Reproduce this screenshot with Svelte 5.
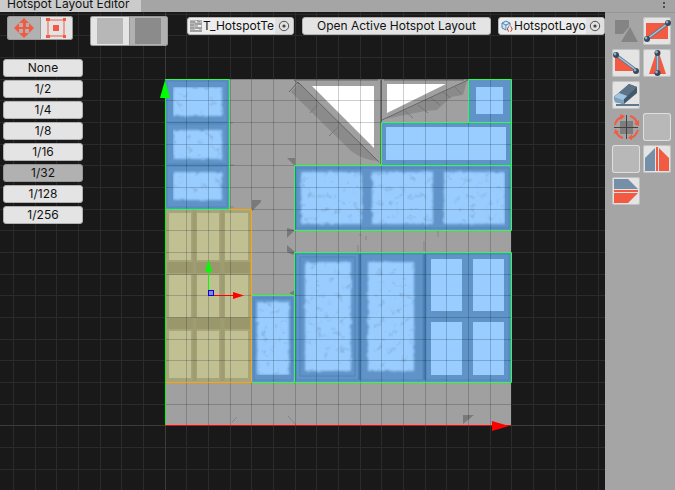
<script>
  const scales = ['None', '1/2', '1/4', '1/8', '1/16', '1/32', '1/128', '1/256'];
  let scale = $state('1/32');
  let mode = $state('move');
  let shade = $state('light');
  let texture = $state('T_HotspotTe');
  let layout = $state('HotspotLayo');

  // Hotspot rectangles and the bright panels of the texture: [x, y, width, height]
  const blues = [
    [165, 79, 64, 130], [252, 296, 42, 86], [381, 122, 130, 43],
    [468, 79, 43, 43], [294, 166, 217, 64], [294, 252, 217, 130]
  ];
  const roughPanels = [
    [173, 87, 49, 29], [173, 130, 49, 29], [173, 172, 49, 28],
    [301, 172, 61, 52], [372, 172, 61, 52], [444, 172, 61, 52],
    [257, 302, 32, 73], [305, 262, 46, 109], [368, 262, 46, 109]
  ];
  const cleanPanels = [
    [476, 87, 27, 27], [386, 127, 120, 33],
    [431, 259, 31, 52], [473, 259, 31, 52], [431, 322, 31, 53], [473, 322, 31, 53]
  ];
  const seams = [
    [167, 81, 60, 41], [167, 124, 60, 40], [167, 166, 60, 41],
    [254, 298, 38, 82], [296, 168, 213, 60], [300, 257, 55, 119],
    [296, 254, 63, 126], [361, 254, 62, 126], [426, 254, 83, 126]
  ];
  const olive = [];
  for (const [y, h] of [[213, 47], [275, 42], [331, 47]])
    for (const [x, w] of [[169, 22], [197, 22], [225, 23]]) olive.push([x, y, w, h]);
  const marks = ['M287 158h8v8z', 'M252 211v-11h9v2z', 'M287 228v10l8-8z', 'M287 245v7l6 3 2-3z', 'M463 415h11l-11 9z', 'M289 293l6-3v6z'];
  const lines = Array.from({ length: 17 }, (_, i) => Math.floor((i * 65) / 3) + 0.5);
</script>

{#snippet ball(x, y)}
  <circle cx={x} cy={y} r="3" fill="#36495c" />
  <circle cx={x - 1} cy={y - 1} r="1.4" fill="#91aec5" />
{/snippet}

{#snippet rects(list)}
  {#each list as [x, y, w, h]}<rect {x} {y} width={w} height={h} />{/each}
{/snippet}

{#snippet picker(name)}
  <button class="pick" aria-label={name}>
    <svg width="12" height="12" viewBox="0 0 12 12"><circle cx="6" cy="6" r="4.7" fill="none" stroke="#505050" /><circle cx="6" cy="6" r="1.6" fill="#444" /></svg>
  </button>
{/snippet}

<div class="window">
  <header>
    <div class="tab">Hotspot Layout Editor</div>
    <button class="more" aria-label="Window menu"><i></i><i></i></button>
  </header>
  <div class="body">
    <main>
      <svg class="scene" aria-hidden="true">
        <defs>
          <pattern id="grid" x="165" y="79" width="65" height="65" patternUnits="userSpaceOnUse">
            <path d="M.5 0V65M21.5 0V65M43.5 0V65M0 .5H65M0 21.5H65M0 43.5H65" stroke="#2b2b2b" />
          </pattern>
          <filter id="soft" x="-5%" y="-5%" width="110%" height="110%"><feGaussianBlur stdDeviation="0.6" /></filter>
          <filter id="rough" x="0" y="0" width="100%" height="100%">
            <feTurbulence type="fractalNoise" baseFrequency="0.2" numOctaves="3" seed="8" result="n" />
            <feDisplacementMap in="SourceGraphic" in2="n" scale="3" xChannelSelector="R" yChannelSelector="G" result="d" />
            <feGaussianBlur in="d" stdDeviation="0.9" />
          </filter>
          <filter id="specks" x="0" y="0" width="100%" height="100%">
            <feTurbulence type="fractalNoise" baseFrequency="0.13" numOctaves="5" seed="5" />
            <feColorMatrix values="0 0 0 0 .2  0 0 0 0 .42  0 0 0 0 .66  2.4 0 0 0 -1.42" />
            <feComposite in2="SourceGraphic" operator="in" />
          </filter>
        </defs>
        <rect width="100%" height="100%" fill="#191919" />
        <g transform="translate(0 -12)">
          <rect width="4000" height="4000" fill="url(#grid)" />
          <path d="M165.5 12V4000M0 425.5H4000" stroke="#3b3b3b" />
          <rect x="165" y="79" width="346" height="346" fill="#a0a0a0" />
          <g filter="url(#soft)">
            <path d="M291 92l8-9 79 78q-15-1-27-10z" fill="#8b8b8b" />
            <path d="M385 119l82-38-4 14-12 2-14 13-12 1z" fill="#8b8b8b" />
            <path d="M405 111l8 7M418 105l10 8M431 98l9 7M443 92l8 6M455 87l6 7M317 105l-7 8M338 127l-9 9" stroke="#787878" />
            <path d="M296 80H378M384 80H464" stroke="#828282" stroke-width="2" />
            <path d="M381 80V164" stroke="#707070" stroke-width="2" />
          </g>
          <path d="M289 92l9-10 81 80M294 80l5 4M382 120l86-40" fill="none" stroke="#666" />
          <path d="M312 86H374V148zM387 84H446L387 113z" fill="#fff" filter="url(#soft)" />
          <g fill="#7a7a7a" filter="url(#soft)">{#each marks as d}<path {d} />{/each}</g>
          <path d="M232 422l5-5M288 416l8 9M359 235h2M366 236v4M438 231v6M358 245v7M424 241v10M229 123h4M229 165h5M230 207h4" stroke="#858585" fill="none" />

          <g fill="#6094c8">{@render rects(blues)}</g>
          <g fill="none" stroke="#5085bb" filter="url(#soft)">{@render rects(seams)}</g>
          <path d="M359.5 254V380M424.5 254V380" stroke="#447ab1" stroke-width="2" filter="url(#soft)" />
          <g fill="#99ccff" filter="url(#rough)">{@render rects(roughPanels)}</g>
          <g filter="url(#specks)">{@render rects(roughPanels)}</g>
          <g fill="#99ccff" filter="url(#soft)">{@render rects(cleanPanels)}</g>

          <rect x="165" y="209" width="87" height="173" fill="#a6a47a" />
          <path d="M167 267.5h83M167 323.5h83" stroke="#9a976c" stroke-width="11" />
          <path d="M194.5 210V381M222.5 210V381" stroke="#9f9c72" stroke-width="4" />
          <g fill="#c1c093" filter="url(#soft)">{@render rects(olive)}</g>

          <g stroke="#001020" stroke-opacity=".2">
            {#each lines as at}
              <path d="M{165 + at} 79v346M165 {79 + at}h346" />
            {/each}
          </g>

          <g fill="none" stroke="#2cff43">
            <path d="M165 79.5H229.5V209.5H165M252 295.5H294.5M252 382.5H294" />
            <path d="M381.5 122.5H511.5V165.5H381.5zM468.5 79.5H511.5V122.5H468.5z" />
            <path d="M294.5 165.5H511.5V230.5H294.5zM294.5 252.5H511.5V382.5H294.5z" />
          </g>
          <path d="M229 209.5H251.5V382.5H165" fill="none" stroke="#ffa500" />
          <path d="M165.5 425V88" stroke="#0f0" />
          <path d="M165 80l5 18h-10z" fill="#0f0" />
          <path d="M165 425.5H511" stroke="#f00" />
          <path d="M492 421l17 5-17 5z" fill="#f00" />
          <path d="M208.5 295V268" stroke="#0f0" />
          <path d="M208.5 260l3.5 11.5h-7z" fill="#0f0" />
          <path d="M209 295.5H235" stroke="#f00" />
          <path d="M233 292l11 3.5-11 3.5z" fill="#f00" />
          <rect x="208.5" y="290.5" width="5" height="5" fill="#8e8cab" stroke="#00f" />
        </g>
      </svg>

      <div class="toolbar">
        <div class="segment">
          <button class:on={mode === 'move'} aria-label="Move" onclick={() => (mode = 'move')}>
            <svg width="20" height="20" viewBox="0 0 20 20"><path fill="#f25a42" d="M10 0l5 5h-3v4h3V5l5 5-5 5v-4h-4v4h4l-5 5-5-5h4v-4H5v4l-5-5 5-5v4h4V5H5z" /></svg>
          </button>
          <button class:on={mode === 'rect'} aria-label="Rectangle" onclick={() => (mode = 'rect')}>
            <svg width="20" height="20" viewBox="0 0 20 20" fill="#f25a42"><path d="M2 2h16v16H2z" fill="none" stroke="#f25a42" /><path d="M0 0h4v3H0zM17 0h3v3h-3zM0 17h4v3H0zM17 17h3v3h-3zM7 7h6v6H7z" /></svg>
          </button>
        </div>
        <div class="segment shades">
          <button class:on={shade === 'dark'} aria-label="Light background" onclick={() => (shade = 'dark')}><span class="swatch light"></span></button>
          <button class:on={shade === 'light'} aria-label="Dark background" onclick={() => (shade = 'light')}><span class="swatch"></span></button>
        </div>
        <div class="field">
          <svg width="12" height="12" viewBox="0 0 12 12"><rect width="12" height="12" fill="#b8b8b8" /><path d="M0 2h5M0 5h4M0 8h4M5 4h7M5 8h7M7 0l3 2M0 11h12" stroke="#898989" /><path d="M5 1h2v2zM8 5h3v2H8zM5 9h4v1H5z" fill="#eee" /></svg>
          <input aria-label="Texture" bind:value={texture} />
          {@render picker('Pick texture')}
        </div>
        <button class="plain open">Open Active Hotspot Layout</button>
        <div class="field last">
          <svg width="12" height="12" viewBox="0 0 12 12" fill="none"><path d="M1 3l4-2 4 2v5L5 10 1 8zM1 3l4 2 4-2M5 5v5" stroke="#4b83b8" fill="#cfe0ee" /><path d="M5.5 6H12v6H5.5z" fill="#ededed" /><path d="M8 6.5q-1 0-1 1.5l-.8 1 .8 1q0 1.500 1 1.500M9.500 6.500q1 0 1 1.500l.8 1-.8 1q0 1.500-1 1.500" stroke="#b5452e" /></svg>
          <input aria-label="Layout" bind:value={layout} />
          {@render picker('Pick layout')}
        </div>
      </div>

      <div class="scales">
        {#each scales as s}
          <button class="plain" class:on={scale === s} onclick={() => (scale = s)}>{s}</button>
        {/each}
      </div>
    </main>

    <aside>
      <button class="flat" aria-label="Shapes"><svg viewBox="0 0 28 28"><path d="M3 3h14v7l-6 7H3zM18 10l8 15H9z" fill="#848484" /></svg></button>
      <button aria-label="Rectangle tool"><svg viewBox="0 0 28 28"><path d="M3 6h22v16H3z" fill="#f25a42" /><path d="M4 22L24 7" stroke="#60778c" stroke-width="3" /><path d="M4 22L24 7" stroke="#a9c6dd" stroke-width="1.5" />{@render ball(4, 22)}{@render ball(25, 6)}</svg></button>
      <button aria-label="Triangle tool"><svg viewBox="0 0 28 28"><path d="M3 6l21 16H3z" fill="#f25a42" /><path d="M4 6l20 15" stroke="#60778c" stroke-width="3" /><path d="M4 6l20 15" stroke="#a9c6dd" stroke-width="1.5" />{@render ball(4, 6)}{@render ball(24, 22)}</svg></button>
      <button aria-label="Cone tool"><svg viewBox="0 0 28 28"><path d="M13 4h3l7 21H6z" fill="#f25a42" /><path d="M14.5 4v20" stroke="#60778c" stroke-width="3" /><path d="M14.5 4v20" stroke="#a9c6dd" stroke-width="1.5" />{@render ball(14.5, 4)}{@render ball(14.5, 24)}</svg></button>
      <button aria-label="Erase"><svg viewBox="0 0 28 28"><path d="M4 24h23" stroke="#63778a" stroke-width="2" /><path d="M2 16L17 3l8 3v6L12 23l-9-2z" fill="#43586b" /><path d="M2 16L17 3l8 3-12 11z" fill="#5d7488" /><path d="M2 16l5-4 8 3-3 3v5l-9-2z" fill="#7da1bf" /><path d="M2 16l5-4 8 3-4 4z" fill="#a3c4df" /></svg></button>
      <button class="flat" aria-label="Rotate"><svg viewBox="0 0 28 28"><path d="M8 8h13v13H8z" fill="#7e7e7e" /><g fill="none" stroke="#f25a42" stroke-width="2"><path d="M3 12q1-6 7-8M18 3q6 2 7 7M26 17q-2 6-7 8M11 25q-6-2-7-7" /></g><path d="M8 1l5 2-4 4zM27 7v6l-5-2zM20 27l-4-2 4-4zM2 21l1-5 4 3z" fill="#f25a42" /><path d="M2 14.5h24M14.5 2v24" stroke="#424242" /></svg></button>
      <button class="empty" aria-label="Empty slot 1"></button>
      <button class="empty" aria-label="Empty slot 2"></button>
      <button aria-label="Flip horizontal"><svg viewBox="0 0 28 28"><path d="M2 13L12 3v23H2z" fill="#758fa8" /><path d="M13 2h2v24h-2zM16 3l10 10v13H16z" fill="#f25a42" /></svg></button>
      <button aria-label="Flip vertical"><svg viewBox="0 0 28 28"><path d="M2 2h14l10 10H2z" fill="#758fa8" /><path d="M2 13h24v2H2zM2 16h24L16 26H2z" fill="#f25a42" /></svg></button>
    </aside>
  </div>
</div>

<style>
  :global(body) { margin: 0; background: #191919; }
  .window { display: flex; flex-direction: column; min-height: 100vh; font: 12px/16px Inter, sans-serif; color: #121212; }
  button, input { font: inherit; color: inherit; padding: 0; border: 0; margin: 0; box-sizing: border-box; }
  button svg, .field svg { display: block; flex: none; }
  header { display: flex; justify-content: space-between; height: 12px; background: #a5a5a5; }
  .tab { display: flex; align-items: flex-end; width: 141px; padding-left: 7px; box-sizing: border-box; background: #cbcbcb; white-space: nowrap; }
  .more { display: flex; flex-direction: column; gap: 2px; width: 21px; padding: 2px 9px; background: none; }
  .more i { width: 2px; height: 2px; background: #4c4c4c; }
  .body { display: flex; flex: 1; }
  main { position: relative; flex: 1; min-width: 0; overflow: hidden; }
  .scene { position: absolute; inset: 0; width: 100%; height: 100%; }
  .toolbar { position: relative; display: flex; align-items: flex-start; padding: 4px 0 0 7px; }
  .segment { display: flex; flex: none; width: 66px; height: 24px; margin-right: 17px; border: 1px solid #999; border-radius: 2px; box-sizing: border-box; overflow: hidden; }
  .segment button { display: flex; flex: 1; align-items: center; justify-content: center; background: #e4e4e4; }
  .segment button.on { background: #b1b1b1; }
  .segment button + button { border-left: 1px solid #999; }
  .shades { width: 78px; height: 30px; margin-right: 19px; }
  .swatch { width: 26px; height: 26px; background: #8b8b8b; }
  .light { background: #b7b7b7; }
  .field { display: flex; align-items: center; flex: 0 0 107px; height: 18px; margin: 1px 8px 0 0; padding-left: 2px; box-sizing: border-box; background: #ededed; border: 1px solid #b5b5b5; border-radius: 3px; overflow: hidden; }
  .field input { flex: 1; min-width: 0; height: 16px; padding-left: 1px; background: none; outline: none; }
  .last { margin-right: 0; }
  .pick { display: flex; flex: none; align-items: center; justify-content: center; width: 18px; height: 16px; background: #e0e0e0; }
  .plain { height: 18px; background: #e4e4e4; border: 1px solid #b0b0b0; border-radius: 3px; }
  .plain.on { background: #b1b1b1; border-color: #959595; }
  .open { flex: 0 0 189px; margin: 1px 7px 0 0; }
  .scales { position: relative; display: flex; flex-direction: column; gap: 3px; width: 80px; margin: 13px 0 0 3px; }
  aside { display: grid; grid-template-columns: 28px 28px; grid-auto-rows: 28px; gap: 4px 3px; align-content: start; width: 70px; padding: 5px 4px 0 7px; box-sizing: border-box; flex: none; background: #a5a5a5; box-shadow: inset 0 1px #959595; }
  aside button { background: #e4e4e4; border-radius: 3px; box-shadow: inset 0 0 0 1px #c2c2c2; }
  aside svg { width: 28px; height: 28px; }
  aside .flat { grid-column-start: 1; background: none; box-shadow: none; }
  aside .empty { background: #b8b8b8; box-shadow: inset 0 0 0 1px #dedede; }
</style>
